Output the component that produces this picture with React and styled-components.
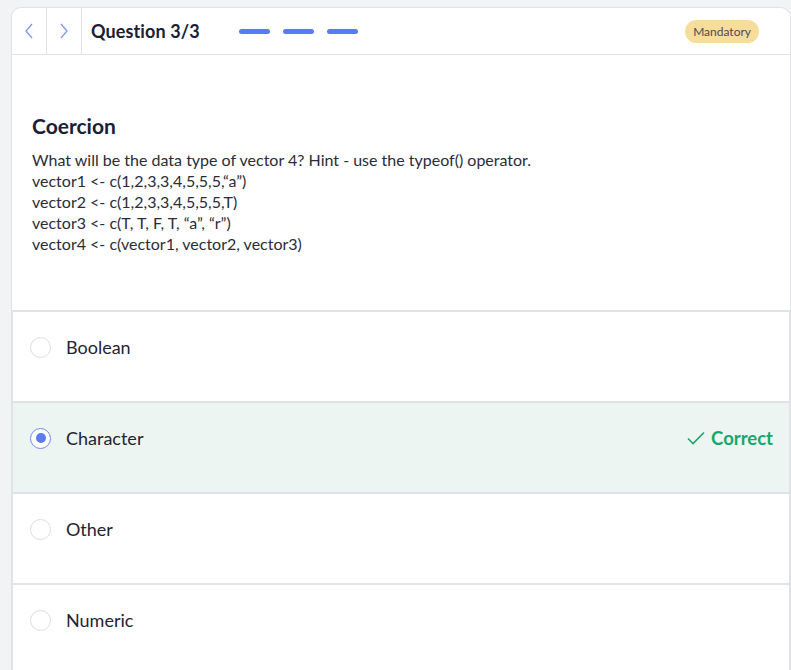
import styled, { createGlobalStyle } from "styled-components";

const GlobalStyle = createGlobalStyle`
  body {
    margin: 0;
    background: #f2f3f5;
    font-family: "Lato", "Liberation Sans", sans-serif;
  }
`;

const Page = styled.div`
  padding: 7px 0 0 11px;
  height: 663px;
  overflow: hidden;
`;

const Card = styled.div`
  width: 778px;
  background: #ffffff;
  border: 1px solid #e1e2e7;
  border-bottom: none;
  border-radius: 10px 10px 0 0;
  min-height: 700px;
`;

const Header = styled.div`
  display: flex;
  align-items: center;
  height: 46px;
  border-bottom: 1px solid #e1e2e7;
`;

const NavButton = styled.button`
  width: 35px;
  height: 46px;
  padding: 0;
  display: flex;
  align-items: center;
  justify-content: center;
  background: none;
  border: none;
  border-right: 1px solid #e1e2e7;
  color: #7f98f2;
  cursor: pointer;
`;

const Title = styled.h2`
  margin: 0 0 0 9px;
  font-size: 18px;
  font-weight: 700;
  color: #1b2035;
  letter-spacing: 0.1px;
`;

const Progress = styled.div`
  display: flex;
  gap: 13px;
  margin-left: 39px;
`;

const Step = styled.span`
  width: 31px;
  height: 5px;
  border-radius: 3px;
  background: #5b7cf0;
`;

const Badge = styled.span`
  margin-left: auto;
  margin-right: 31px;
  padding: 4px 8px;
  border-radius: 12px;
  background: #f7dd9b;
  color: #4b4a4f;
  font-size: 12px;
`;

const Question = styled.div`
  padding: 58px 20px 56px 20px;
`;

const QuestionTitle = styled.h3`
  margin: 0 0 11px 0;
  font-size: 21px;
  font-weight: 700;
  color: #1b2035;
`;

const Body = styled.p`
  margin: 0;
  font-size: 16px;
  line-height: 21px;
  color: #2a2d38;
  white-space: pre-line;
`;

const Option = styled.div`
  display: flex;
  align-items: center;
  height: 20px;
  padding: 25px 16px 44px 17px;
  border-top: 2px solid #e1e2e7;
  border-left: 1px solid #e1e2e7;
  border-right: 1px solid #e1e2e7;
  background: ${(p) => (p.$selected ? "#edf5f2" : "#ffffff")};
`;

const Radio = styled.span`
  box-sizing: border-box;
  width: 21px;
  height: 21px;
  border-radius: 50%;
  border: 1px solid ${(p) => (p.$checked ? "#6d89f2" : "#dcdde2")};
  background: #ffffff;
  display: flex;
  align-items: center;
  justify-content: center;
  &::after {
    content: "";
    width: 10px;
    height: 10px;
    border-radius: 50%;
    background: ${(p) => (p.$checked ? "#5b7cf0" : "transparent")};
  }
`;

const Label = styled.span`
  margin-left: 15px;
  font-size: 18px;
  color: #1f2433;
`;

const Correct = styled.span`
  margin-left: auto;
  display: flex;
  align-items: center;
  gap: 6px;
  color: #14a86c;
  font-size: 18.5px;
  font-weight: 700;
`;

const Chevron = ({ dir }) => (
  <svg width="10" height="16" viewBox="0 0 10 16" fill="none">
    <path
      d={dir === "left" ? "M8 1L2 8l6 7" : "M2 1l6 7-6 7"}
      stroke="currentColor"
      strokeWidth="1.3"
    />
  </svg>
);

const Check = () => (
  <svg width="18" height="14" viewBox="0 0 18 14" fill="none">
    <path d="M1 7.5l5 5L17 1.5" stroke="#14a86c" strokeWidth="1.6" />
  </svg>
);

const options = [
  { label: "Boolean" },
  { label: "Character", selected: true },
  { label: "Other" },
  { label: "Numeric" },
];

const App = () => {
  return (
    <>
      <GlobalStyle />
      <Page>
        <Card>
          <Header>
            <NavButton>
              <Chevron dir="left" />
            </NavButton>
            <NavButton>
              <Chevron dir="right" />
            </NavButton>
            <Title>Question 3/3</Title>
            <Progress>
              <Step />
              <Step />
              <Step />
            </Progress>
            <Badge>Mandatory</Badge>
          </Header>
          <Question>
            <QuestionTitle>Coercion</QuestionTitle>
            <Body>
              {`What will be the data type of vector 4? Hint - use the typeof() operator.
vector1 <- c(1,2,3,3,4,5,5,5,“a”)
vector2 <- c(1,2,3,3,4,5,5,5,T)
vector3 <- c(T, T, F, T, “a”, “r”)
vector4 <- c(vector1, vector2, vector3)`}
            </Body>
          </Question>
          {options.map((o) => (
            <Option key={o.label} $selected={o.selected}>
              <Radio $checked={o.selected} />
              <Label>{o.label}</Label>
              {o.selected && (
                <Correct>
                  <Check />
                  Correct
                </Correct>
              )}
            </Option>
          ))}
        </Card>
      </Page>
    </>
  );
};

export default App;
